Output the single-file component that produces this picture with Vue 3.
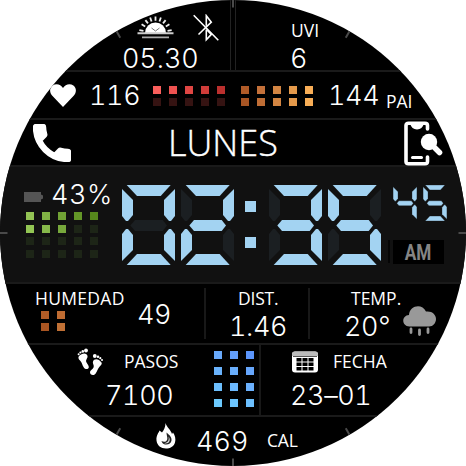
<script setup>
const shapes = {
  a: '4.7,0 48.7,0 38.7,11 15,11',
  b: '53,4 53,31 49,36 47,36 42,30 42,15',
  c: '53,76 53,49 49,44 47,44 42,50 42,65',
  d: '4.7,80 48.7,80 38.7,69 15,69',
  e: '0,76 0,49 4,44 6,44 11,50 11,65',
  f: '0,4 0,31 4,36 6,36 11,30 11,15',
  g: '8.3,40.5 13,35 40.7,35 45,40.5 40.7,46 13,46'
}
const lit = { 0: 'abcdef', 2: 'abged', 3: 'abgcd', 4: 'fgbc', 5: 'afgcd' }
const segments = (n) => Object.keys(shapes).map((k) => ({ k, points: shapes[k], on: lit[n].includes(k) }))

const red = ['#fb5f5c', '#ee5250', '#e04643', '#d03c39', '#bb302e', ...Array(5).fill('#351312')]
const amber = ['#b05b28', '#c4713a', '#d38542', '#e59a4b', '#f8ae57', '#a85524', '#bf6d35', '#d38542', '#e59a4b', '#f8ae57']
const green = ['#93c354', '#82b345', '#71a235', '#639627', '#56871c', '#93c654', '#86b94a', '#77a83c', ...Array(12).fill('#1d2517')]
const rust = ['#b25c27', '#bf6c32', '#a95522', '#c07035']
const blue = ['#68a9fb', '#639ffb', '#5b95fb', '#69b2fc', '#69aefc', '#66a6fc', '#6bbefd', '#6bb8fd', '#6ab0fd', '#6ccafe', '#6cc5fe', '#6cbffe']
const rays = [-80, -58, -38, -19, 0, 19, 38, 58, 80]
const ticks = [0, 30, 90, 150, 180, 210, 270, 330]
</script>

<template>
  <main class="face">
    <section class="row sun-row">
      <div class="sun-cell">
        <div class="sun-icons">
          <svg class="sunrise" viewBox="0 0 37 23">
            <path d="M8 17a10.5 10.5 0 0 1 21 0z" fill="#fff" />
            <path v-for="r in rays" :key="r" d="M18.5 4.8V.6" :transform="`rotate(${r} 18.5 17)`" stroke="#eee" stroke-width="1.8" />
            <path d="M14.5 12l4 3 4-3" fill="none" stroke="#777" />
            <path d="M.5 17.3h36" stroke="#ccc" stroke-width="2" />
            <path d="M5 21.3h27" stroke="#aaa" stroke-width="1.8" />
          </svg>
          <svg class="bluetooth" viewBox="0 0 26 28" fill="none" stroke="#fff" stroke-width="1.6">
            <path d="M.7 1.2l24.6 25M5.5 20.5l12.8-12.3-5-6.5v10M13.3 15.5v10.2l5-5.3-4-4.2" />
          </svg>
        </div>
        <span class="num sun-time">05.30</span>
      </div>
      <div class="uvi-cell">
        <span class="label uvi-label">UVI</span>
        <span class="num">6</span>
      </div>
    </section>

    <section class="row heart-row">
      <svg class="heart" viewBox="0 0 26 23"><path d="M13 23L2.3 11.8C-1 8-.3 3.5 2.6 1.4 6-.9 10.800 0 13 4 15.200 0 20-.9 23.400 1.400 26.300 3.500 27 8 23.700 11.800z" fill="#fff" /></svg>
      <span class="num bpm">116</span>
      <div class="dots five red"><i v-for="(c, n) in red" :key="n" :style="{ background: c }" /></div>
      <div class="dots five amber"><i v-for="(c, n) in amber" :key="n" :style="{ background: c }" /></div>
      <span class="num pai">144</span>
      <span class="label pai-label">PAI</span>
    </section>

    <section class="row day-row">
      <svg class="phone" viewBox="2.500 2.500 19 19"><path d="M6.620 10.790c1.440 2.830 3.760 5.140 6.590 6.590l2.200-2.200c.27-.27.67-.36 1.020-.24 1.120.37 2.330.57 3.570.57.55 0 1 .45 1 1V20c0 .55-.45 1-1 1-9.390 0-17-7.610-17-17 0-.55.45-1 1-1h3.500c.55 0 1 .45 1 1 0 1.250.2 2.450.57 3.570.11.35.03.74-.25 1.020l-2.200 2.200z" fill="#fff" stroke="#fff" stroke-width="1.200" /></svg>
      <span class="label day">LUNES</span>
      <svg class="finder" viewBox="0 0 39 45" fill="none" stroke="#fff" stroke-linecap="round">
        <path d="M23.500 8V4.500Q23.500 2.200 21 2.200H4.500Q2 2.200 2 4.500V40.500Q2 42.800 4.500 42.800H21Q23.500 42.800 23.500 40.500V36" stroke-width="3.600" />
        <path d="M6 2h14q-1.500 6.500-7 6.500T6 2z" fill="#fff" stroke="none" />
        <path d="M8.500 36.500h9" stroke-width="3" />
        <path d="M31 27l4.500 4.500" stroke-width="5.500" />
        <circle cx="25" cy="21" r="8.200" fill="#fff" stroke="none" />
      </svg>
    </section>

    <section class="row time-row">
      <div class="battery-cell">
        <div class="battery-head">
          <svg class="battery" viewBox="0 0 19 10"><path d="M0 0h17v2.500l2 1v3l-2 1V10H0z" fill="#555" /></svg>
          <span class="num percent">43%</span>
        </div>
        <div class="dots five green"><i v-for="(c, n) in green" :key="n" :style="{ background: c }" /></div>
      </div>
      <div class="clock">
        <svg v-for="(d, n) in [0, 2]" :key="n" class="digit" viewBox="0 0 53 80">
          <polygon v-for="s in segments(d)" :key="s.k" :points="s.points" :class="s.on ? 'on' : 'off'" />
        </svg>
        <div class="colon"><i /><i /></div>
        <svg v-for="(d, n) in [3, 5]" :key="'m' + n" class="digit" viewBox="0 0 53 80">
          <polygon v-for="s in segments(d)" :key="s.k" :points="s.points" :class="s.on ? 'on' : 'off'" />
        </svg>
      </div>
      <div class="side">
        <div class="seconds">
          <svg v-for="d in [4, 5]" :key="d" class="small-digit" viewBox="0 0 53 80">
            <template v-for="s in segments(d)" :key="s.k">
              <polygon v-if="s.on" :points="s.points" class="on thin" />
            </template>
          </svg>
        </div>
        <div class="meridiem-row">
          <i class="sliver" />
          <div class="meridiem"><span>AM</span></div>
        </div>
      </div>
    </section>

    <section class="row weather-row">
      <div class="humidity">
        <div class="humidity-left">
          <span class="label humedad">HUMEDAD</span>
          <div class="dots two"><i v-for="(c, n) in rust" :key="n" :style="{ background: c }" /></div>
        </div>
        <span class="num humidity-value">49</span>
      </div>
      <div class="distance">
        <span class="label dist">DIST.</span>
        <span class="num dist-value">1.46</span>
      </div>
      <div class="temperature">
        <div class="temp-text">
          <span class="label temp">TEMP.</span>
          <span class="num temp-value">20°</span>
        </div>
        <svg class="cloud" viewBox="0 0 33 30">
          <path d="M6.500 20.500C-2 20-1.500 9.500 6 9 6.500-.5 19-3 23 5.500c6-.8 10 3 10 7.500 0 4-3 7.500-7 7.500z" fill="#999" />
          <path d="M8 23v3.500M16.500 24v4.500M25 23v3.500" stroke="#999" stroke-width="2.800" stroke-linecap="round" />
        </svg>
      </div>
    </section>

    <section class="row steps-row">
      <div class="steps">
        <div class="steps-head">
          <svg class="feet" viewBox="0 0 26 28" fill="#fff">
            <path d="M2 8C5 4.500 10 4.500 10.500 8c.3 2.500-2 3.500-1.200 6 .7 2 2.500 3 2.500 5 0 2.500-3.500 2.800-5 .5C5.200 17 5 14.500 3 12.500 1.500 11 .8 9.500 2 8z" />
            <path d="M24.500 14.500C22 10.500 17 10 16 13.500c-.6 2.500 1.500 3.500.5 6-.8 1.700-3.200 2.500-3.500 4.500-.3 3 3.700 4 5.500 1.700 1.700-2.200 2-5 4-7 1.700-1.500 2.800-2.800 2-4.200z" />
            <circle cx="9" cy="2.500" r="1.900" /><circle cx="5.800" cy="3.400" r="1.300" /><circle cx="3.400" cy="4.500" r="1.100" /><circle cx="1.600" cy="6.200" r="1" />
            <circle cx="17.800" cy="8" r="1.900" /><circle cx="21" cy="8.800" r="1.300" /><circle cx="23.300" cy="10.200" r="1.100" /><circle cx="25" cy="12" r="1" />
          </svg>
          <span class="label pasos">PASOS</span>
        </div>
        <span class="num steps-value">7100</span>
      </div>
      <div class="dots three"><i v-for="(c, n) in blue" :key="n" :style="{ background: c }" /></div>
      <div class="date">
        <div class="date-head">
          <svg class="calendar" viewBox="0 0 26 22">
            <rect y=".5" width="26" height="21" rx="3" fill="#fff" />
            <path d="M0 5V3.500Q0 .5 3 .5H23Q26 .5 26 3.500V5z" fill="#bbb" />
            <path d="M1 5.500h24" stroke="#555" />
            <path d="M4.500 7h5v3.500h-5zM10.500 7h5v3.500h-5zM16.500 7h5v3.500h-5zM4.500 11.500h5V15h-5zM10.500 11.500h5V15h-5zM16.500 11.500h5V15h-5zM4.500 16h5v3.500h-5zM10.500 16h5v3.500h-5zM16.500 16h5v3.500h-5z" fill="#000" />
          </svg>
          <span class="label fecha">FECHA</span>
        </div>
        <span class="num date-value">23–01</span>
      </div>
    </section>

    <section class="row calories-row">
      <svg class="flame" viewBox="0 0 20 26">
        <path d="M9.500 0c1 4 5.500 7 6.500 11l1-1.500c2 3 3 6.500 2 10-1.200 4-5 6-9 6-5 0-9-3-9.500-8C0 12 3 9.500 3.500 7.500L6 9.500C8 7 9.500 4 9.500 0z" fill="#fff" />
        <path d="M10.500 9.500c3 2.500 5.500 5 5 8-.5 3-3 4.500-6.500 4-2-.3-3-1.700-3.500-3.500 2.500 1.500 5 .8 5.700-1.500.6-2-.7-4-.7-7z" fill="#222" />
        <path d="M8 20c3.500 0 5.500-2.500 4.500-6.500 2.500 3.500 1 7-3 7z" fill="#ddd" />
      </svg>
      <span class="num cal-value">469</span>
      <span class="label cal">CAL</span>
    </section>

    <svg class="ticks" viewBox="0 0 466 466">
      <path v-for="t in ticks" :key="t" d="M233 0v7.500" :transform="`rotate(${t} 233 233)`" />
    </svg>
  </main>
</template>

<style>
body {
  background: #fff;
}
</style>

<style scoped>
.face {
  position: relative;
  display: flex;
  flex-direction: column;
  width: 466px;
  height: 466px;
  overflow: hidden;
  border-radius: 50%;
  background: #000;
  color: #fff;
}
.face * { box-sizing: border-box; }
svg { display: block; flex: none; }
.row {
  display: flex;
  flex: none;
  align-items: flex-start;
  border-bottom: 2px solid #1a1a1a;
}
.num, .label { display: block; flex: none; white-space: nowrap; }
.num { font: 300 27px/20px Inter, sans-serif; font-variant-numeric: tabular-nums; letter-spacing: -0.400px; }
.label { font: 400 17.500px/20px "Open Sans", sans-serif; letter-spacing: 0; }

.dots { display: grid; flex: none; gap: 4px 8px; }
.dots i { width: 8px; height: 8px; }
.five { grid-template-columns: repeat(5, 8px); }
.two { grid-template-columns: repeat(2, 8px); }
.three { grid-template-columns: repeat(3, 8px); gap: 8px; }

.sun-row { height: 72px; }
.sun-cell { width: 231px; height: 70px; padding-top: 14px; border-right: 1px solid #222; }
.sun-icons { display: flex; height: 35px; padding-left: 137px; gap: 19px; }
.sunrise { width: 37px; height: 23px; margin-top: 2px; }
.bluetooth { width: 26px; height: 28px; }
.sun-time { margin-left: 122px; letter-spacing: -0.100px; }
.uvi-cell { height: 70px; margin-left: 4px; padding: 20px 0 0 54px; border-left: 1px solid #222; }
.uvi-label { margin-left: 1px; }
.uvi-cell .num { margin-top: 9px; }

.heart-row { height: 48px; padding: 12px 0 0 50px; }
.heart { width: 26px; height: 23px; }
.bpm { width: 64px; margin: 2px 0 0 13px; }
.dots.red, .dots.amber { margin-top: 2px; }
.dots.amber { margin-left: 16px; }
.pai { width: 58px; margin: 2px 0 0 15px; }
.pai-label { margin-top: 7px; }

.day-row { height: 47px; }
.phone { width: 38px; height: 38px; margin: 4px 0 0 33px; }
.day { width: 236px; margin: 2px 0 0 97px; font-size: 36px; font-weight: 300; line-height: 42px; -webkit-text-stroke: 0.400px #fff; }
.finder { width: 39px; height: 45px; margin-top: 1px; }

.time-row { height: 117px; background: #111; }
.battery-cell { width: 122px; padding: 17px 0 0 24px; }
.battery-head { display: flex; }
.battery { width: 19px; height: 10px; margin: 8px 8px 0 0; }
.percent { margin-top: 1px; letter-spacing: 0.500px; }
.dots.green { margin: 7px 0 0 2px; row-gap: 4.700px; }
.clock { display: flex; padding-top: 18px; gap: 6px; }
.digit { width: 53px; height: 80px; }
.on { fill: #a3d3f2; }
.off { fill: #1b1f22; }
.thin { stroke: #111; stroke-width: 0.700; }
.colon { display: flex; flex-direction: column; width: 23px; padding: 16px 0 0 5px; gap: 25px; }
.colon i { width: 11px; height: 11px; background: #a3d3f2; }
.side { padding: 18px 0 0 7px; }
.seconds { display: flex; padding-left: 5px; gap: 6px; }
.small-digit { width: 24px; height: 36px; }
.meridiem-row { display: flex; margin-top: 19px; gap: 3px; }
.sliver { width: 2px; height: 23px; background: #050505; }
.meridiem { display: flex; justify-content: center; width: 51px; height: 24px; background: #000; color: #858585; font: 700 22px/25px Roboto, sans-serif; }
.meridiem span { transform: scaleX(0.780); }

.weather-row { height: 61px; }
.humidity { display: flex; width: 206px; height: 51px; margin-top: 4px; padding-left: 35px; border-right: 2px solid #181818; }
.humidity-left { width: 102px; }
.two { margin: 3px 0 0 6px; }
.humidity-value { margin-top: 17px; }
.humedad { letter-spacing: 0.300px; }
.distance { width: 104px; height: 51px; margin-top: 4px; padding-left: 23px; border-right: 2px solid #181818; }
.dist { margin-left: 9px; letter-spacing: -0.200px; }
.dist-value { margin-top: 9px; }
.temperature { display: flex; padding-top: 4px; }
.temp-text { width: 93px; padding-left: 34px; }
.temp { margin-left: 7px; }
.temp-value { margin-top: 9px; }
.cloud { width: 33px; height: 30px; margin-top: 18px; }

.steps-row { height: 72px; }
.steps { width: 214px; padding-top: 3px; }
.steps-head { display: flex; padding-left: 77px; }
.feet { width: 26px; height: 28px; }
.pasos { margin: 3px 0 0 21px; }
.steps-value { margin: 10px 0 0 105px; }
.three { margin-top: 6px; }
.date { height: 70px; margin-left: 5px; padding: 6px 0 0 29px; border-left: 2px solid #181818; }
.date-head { display: flex; }
.calendar { width: 26px; height: 22px; margin: 0 15px 0 2px; }
.date-value { margin-top: 13px; }

.calories-row { height: 49px; border: 0; }
.flame { width: 20px; height: 26px; margin: 6px 0 0 156px; }
.cal-value { width: 71px; margin: 15px 0 0 20px; letter-spacing: 0; }
.cal { margin-top: 13px; letter-spacing: -0.200px; }

.ticks { position: absolute; inset: 0; width: 466px; height: 466px; }
.ticks path { stroke: #4a4a4a; stroke-width: 2; }
</style>
